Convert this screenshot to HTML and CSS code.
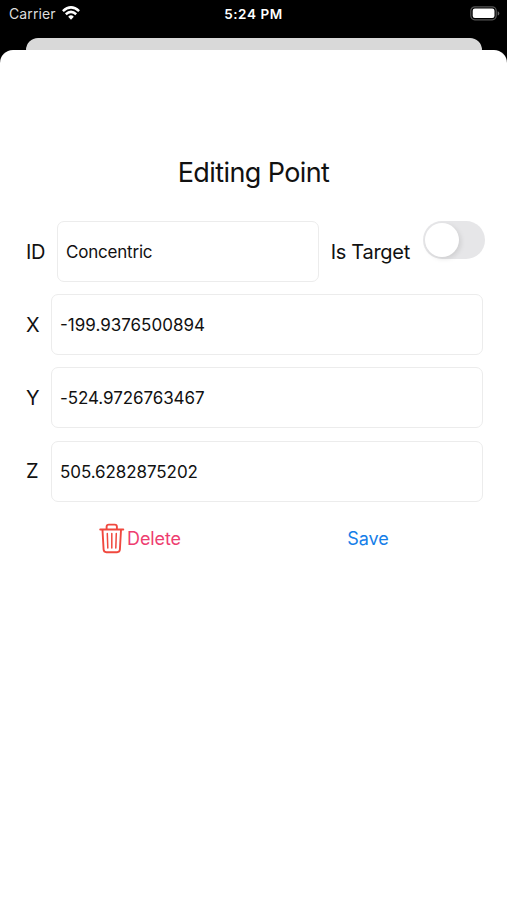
FILE: index.html
```
<!DOCTYPE html>
<html lang="en">
<head>
<meta charset="utf-8">
<title>Editing Point</title>
<link rel="stylesheet" href="styles.css">
</head>
<body>
<header class="status">
  <div class="carrier"><span>Carrier</span>
    <svg width="18" height="14" viewBox="0 0 18 14" fill="none" stroke="#fff" stroke-width="2.5"><path d="M.9 5.1Q9-2.3 17.1 5.1"/><path d="M3.8 8.2Q9 3.6 14.2 8.2"/><path d="M6.2 10.7Q9 8 11.8 10.7L9 13.7Z" fill="#fff" stroke="none"/></svg>
  </div>
  <time>5:24 PM</time>
  <div class="power">
    <svg width="30" height="15" viewBox="0 0 30 15"><rect x=".8" y=".8" width="25.4" height="13" rx="4" fill="none" stroke="#555" stroke-width="1.2"/><rect x="2.7" y="2.6" width="21.8" height="9.4" rx="2.2" fill="#fff"/><path d="M27.7 5.2Q29.3 5.7 29.3 7.4T27.7 9.6Z" fill="#666"/></svg>
  </div>
</header>
<div class="behind"></div>
<main class="sheet">
  <h1>Editing Point</h1>
  <form class="form">
    <div class="row row-id">
      <label class="label id-label">ID</label>
      <div class="field"><span class="name">Concentric</span></div>
      <span class="label target">Is Target</span>
      <div class="switch"><div class="knob"></div></div>
    </div>
    <div class="row"><label class="label axis">X</label><div class="field"><span class="num">-199.9376500894</span></div></div>
    <div class="row"><label class="label axis">Y</label><div class="field"><span class="num num-y">-524.9726763467</span></div></div>
    <div class="row"><label class="label axis">Z</label><div class="field"><span class="num num-z">505.6282875202</span></div></div>
  </form>
  <div class="actions">
    <div class="action delete">
      <svg width="26" height="31" viewBox="0 0 26 31" fill="none" stroke="#f0483e" stroke-width="1.9" stroke-linecap="round" stroke-linejoin="round"><path d="M1.2 6.5H24.3M7.6 6V3.7Q7.6 1.6 9.8 1.6H15.7Q17.9 1.6 17.9 3.7V6M3.5 7L4.6 26.5Q4.8 29.2 7.4 29.2H18.1Q20.7 29.2 20.9 26.5L22 7"/><path stroke-width="1.5" d="M8.3 10.6L8.8 25M12.8 10.6V25M17.3 10.6L16.8 25"/></svg>
      <span>Delete</span>
    </div>
    <div class="action save"><span>Save</span></div>
  </div>
</main>
</body>
</html>
```
FILE: styles.css
```
* { box-sizing: border-box; }
body {
  margin: 0;
  height: 900px;
  background: #000;
  font-family: Inter, "Liberation Sans", sans-serif;
  color: #111;
  overflow: hidden;
  display: flex;
  flex-direction: column;
}
.status {
  height: 38px;
  padding: 5px 7px 0 9px;
  display: grid;
  grid-template-columns: 1fr auto 1fr;
  align-items: start;
  color: #fff;
  font-size: 14px;
  line-height: 18px;
}
.carrier { display: flex; gap: 6px; color: #ddd; letter-spacing: .1px; }
.carrier svg { margin-top: 1px; }
.status time { font-weight: 600; font-size: 13.5px; letter-spacing: .6px; margin-right: 2px; }
.power { display: flex; justify-content: flex-end; padding-top: 1px; }
.behind { height: 12px; flex: none; margin: 0 25px 0 26px; background: #d9d9d9; border-radius: 12px 12px 0 0; }
.sheet { flex: 1; background: #fff; border-radius: 13px 13px 0 0; padding: 104px 24px 0 26px; }
h1 {
  margin: 0 2px 31px 0;
  height: 36px;
  line-height: 37px;
  font-size: 27px;
  font-weight: 400;
  letter-spacing: -.6px;
  text-align: center;
}
.form { display: grid; gap: 12.2px; }
.row { display: flex; align-items: center; height: 61px; }
.row-id { margin-right: -2px; }
.label { font-size: 20px; line-height: 26px; white-space: nowrap; flex: none; }
.id-label { width: 31px; letter-spacing: -.4px; }
.axis { width: 25px; }
.field {
  flex: 1;
  height: 61px;
  border: 1px solid #ececec;
  border-radius: 7px;
  padding: 1px 0 0 8px;
  display: flex;
  align-items: center;
  font-size: 17px;
}
.name { letter-spacing: -.2px; }
.num-y, .num-z { letter-spacing: -.08px; }
.target { margin: 0 13px 0 12px; letter-spacing: -.28px; }
.switch { width: 62px; height: 38px; border-radius: 19px; background: #e6e6e8; align-self: flex-start; padding: 2px; flex: none; }
.knob { width: 34px; height: 34px; border-radius: 50%; background: #fff; box-shadow: 2px 2px 5px #0000001a; }
.actions { display: grid; grid-template-columns: 228px 228px; height: 31px; margin-top: 21px; }
.action { display: flex; align-items: center; justify-content: center; font-size: 18px; letter-spacing: -.1px; }
.delete { color: #ee3d70; gap: 2px; }
.save { color: #157ee8; }
```
